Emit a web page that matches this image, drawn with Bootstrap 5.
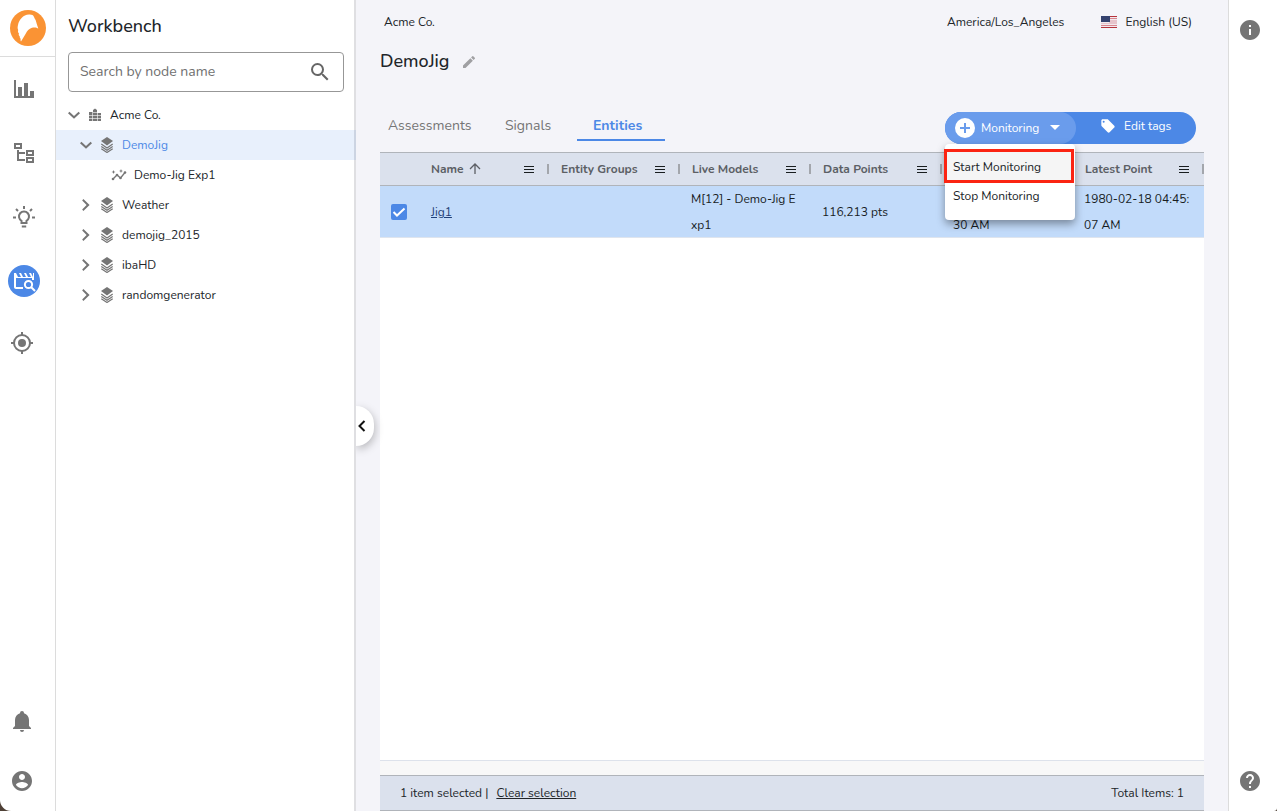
<!DOCTYPE html>
<html lang="en">
<head>
<meta charset="utf-8">
<meta name="viewport" content="width=device-width, initial-scale=1">
<title>Workbench</title>
<link href="https://cdn.jsdelivr.net/npm/bootstrap@5.3.0/dist/css/bootstrap.min.css" rel="stylesheet">
<style>
  :root { --blue: #4c88e6; --ink: #212529; --muted-ink: #757575; --head: #dbe1ed; --line: #b0b4ba; }
  body { font-family: Nunito, Lato, "Open Sans", sans-serif; font-size: 12px; line-height: 20px; color: var(--ink); background: #4e4036; }
  button { font: inherit; color: inherit; }
  svg { display: block; flex: none; fill: currentColor; }
  .outline-icon { fill: none; stroke: currentColor; stroke-width: 2; }
  .app { height: 100vh; background: #fff; border-radius: 0 0 3px 11px; }

  .rail { width: 56px; border-right: 1px solid #dcdcdc; color: var(--muted-ink); }
  .rail a { color: inherit; }
  .rail-logo { height: 57px; border-bottom: 1px solid #dcdcdc; }
  .rail-item { width: 48px; height: 64px; }
  .rail-item.compact { width: 44px; height: 60px; }
  .rail-active { width: 32px; height: 32px; border-radius: 50%; background: var(--blue); color: #fff; }

  .tree-panel { width: 300px; border-right: 2px solid #dfdfe2; }
  .tree-panel h1 { font-size: 18px; line-height: 52px; font-weight: 500; }
  .search-box { height: 40px; margin: 0 10px 8px 12px; padding: 0 11px; border: 1px solid #979797; border-radius: 4px; color: #666; }
  .search-box input { font-size: 14px; color: inherit; outline: 0; background: none; }
  .search-box input::placeholder { color: #707070; opacity: 1; }
  .tree-row { height: 30px; margin-right: -2px; color: var(--ink); text-decoration: none; }
  .tree-row svg { color: #757575; }
  .tree-row .kind { width: 22px; }
  .tree-row.selected { background: rgba(76, 136, 230, .13); color: var(--blue); }
  .level-1 { padding-left: 8px; }
  .level-2 { padding-left: 20px; }
  .level-3 { padding-left: 52px; }

  .main-area { background: #f4f4f9; padding: 0 24px; }
  .collapse-btn { left: 0; top: 50%; width: 18px; height: 40px; border-radius: 0 20px 20px 0; background: #fff; box-shadow: 1px 3px 8px rgba(0,0,0,.25); clip-path: inset(-20px -20px -20px 0); }
  .topline { height: 44px; }
  .flag { margin-left: 37px; }
  .title-line { height: 36px; margin-bottom: 32px; }
  .title-line h2 { font-size: 18px; font-weight: 500; }
  .toolbar { height: 40px; }
  .tab-link { min-width: 88px; height: 29px; padding-left: 16px; line-height: 28px; font-size: 14px; text-decoration: none; color: var(--muted-ink); }
  .tab-link.current { color: var(--blue); font-weight: 700; border-bottom: 2px solid var(--blue); }
  .tab-link.first { min-width: 109px; padding-left: 8px; }
  .pill-group { height: 32px; margin-right: 8px; border-radius: 16px; background: var(--blue); color: #fff; }
  .pill-btn { width: 120px; border-radius: 16px; color: #fff; }
  .pill-btn.open { width: 131px; background: #6a9cec; }
  .action-menu { top: 32px; left: 0; width: 130px; height: 76px; padding-top: 6px; background: #fff; border-radius: 4px; box-shadow: 0 4px 9px rgba(0,0,0,.38); z-index: 5; color: var(--ink); }
  .action-menu button { height: 30px; padding: 0 8px; width: 130px; text-align: left; white-space: nowrap; }
  .action-menu .marked { height: 34px; margin: -1px 0 -2px -1px; background: #f5f5f5; border: 3px solid #fb2412; padding: 2px 6px 0; }

  .grid-box { background: #fff; }
  .grid { table-layout: fixed; width: 100%; border-collapse: separate; border-spacing: 0; }
  .grid thead { background: var(--head); }
  .grid th { height: 34px; padding: 0 0 0 12px; font-weight: 700; color: #5c5f65; border-top: 1px solid var(--line); border-bottom: 1px solid var(--line); }
  .grid td { height: 52px; padding: 0 0 0 11px; line-height: 26px; background: #c2dbfa; box-shadow: inset 0 -1px #dfe5ee; color: #181d1f; white-space: nowrap; }
  .grid .pick { width: 38px; padding: 0 0 0 11px; }
  .grid .key { padding-left: 13px; }
  .head-menu { width: 10px; height: 7px; border: solid #181d1f; border-width: 1px 0; }
  .head-menu i { display: block; height: 1px; margin-top: 2px; background: #181d1f; }
  .sep { width: 2px; height: 10px; margin-left: 13px; background: #a3a6ac; }
  .pick-box { width: 16px; height: 16px; margin: 0; border: 0; display: block; }
  .pick-box.form-check-input:checked { background-color: var(--blue); background-image: none; border-radius: 2px; }
  .item-link { color: #1f3f77; }
  .grid-strip { height: 15px; background: #f8f8f8; border-top: 1px solid #dde2eb; }
  .grid-foot { height: 36px; padding: 0 20px; background: var(--head); border-top: 1px solid var(--line); border-bottom: 1px solid var(--line); }
  .side-rail { width: 49px; border-left: 1px solid #dcdcdc; color: #757575; padding: 18px 6px 18px 0; }
</style>
</head>
<body>
<svg width="0" height="0" class="position-absolute" aria-hidden="true">
  <symbol id="down" viewBox="0 0 24 24"><path d="M4 9.500 5.900 7.600 12 13.200 18.100 7.600 20 9.500 12 17z"/></symbol>
  <symbol id="right" viewBox="0 0 24 24"><path d="M8.500 4 6.900 5.900 12.800 12 6.900 18.100 8.500 20 16.800 12z"/></symbol>
  <symbol id="layers" viewBox="0 0 14 16"><path d="M7 0 13 4 7 8.500 1 4z"/><path d="M1.300 7 7 11 12.700 7M1.300 9.500 7 13.300 12.700 9.500M1.300 11.700 7 15.500 12.700 11.700" fill="none" stroke="currentColor" stroke-width="1.200"/></symbol>
</svg>
<div class="app d-flex overflow-hidden">
  <nav class="rail d-flex flex-column flex-shrink-0" aria-label="Sections">
    <a href="#" class="rail-logo d-flex align-items-center justify-content-center" aria-label="Home">
      <svg width="36" height="36" viewBox="0 0 36 36"><circle cx="18" cy="18" r="18" fill="#fa9334"/><path fill="#fff" d="M8 15C9 10 13 4.800 19 4.600c2.500-.2 4.300.6 5 2.400.3 1 1 1.800 1.600 3C26.500 12.500 27 15 28.300 18.600c-2-1.600-4.500-1.300-6.300-.8-3 .9-5 3-6.300 6L11 31.500c-.8-1-.2-2-.5-2.900-1-.6-.6-1.600-.9-2.500-1.200-.8-.8-1.900-.7-2.900-1.300-1-.9-2.200-.7-3.200-.9-1.500-.6-3.300-.2-5z"/></svg>
    </a>
    <a href="#" class="rail-item d-flex align-items-center justify-content-center" aria-label="Charts"><svg width="20" height="20" viewBox="0 0 20 20"><path d="M0 1h2v16h18v2H0zM4 8h4v9H4zM10 4h4v13h-4zM16 12h4v5h-4z"/></svg></a>
    <a href="#" class="rail-item d-flex align-items-center justify-content-center" aria-label="Hierarchy"><svg class="outline-icon" width="22" height="22" viewBox="0 0 22 22"><path d="M2 2h6v4H2zM5 8v10h7M5 11h7M14 9h6v4h-6zM14 16h6v4h-6z"/></svg></a>
    <a href="#" class="rail-item d-flex align-items-center justify-content-center" aria-label="Insights"><svg class="outline-icon" width="24" height="24" viewBox="0 0 24 24"><path d="M9.500 18v-2.200a5 5 0 1 1 5 0V18zM9.800 21.500h4.400M12 1v3M1 12.500h3M20 12.500h3M4 4l2 2M20 4l-2 2"/></svg></a>
    <a href="#" class="rail-item d-flex align-items-center justify-content-center" aria-label="Workbench" aria-current="page"><span class="rail-active d-flex align-items-center justify-content-center"><svg width="24" height="24" viewBox="0 0 24 24"><path d="M2 4h2l2 4h3L7 4h2l2 4h3l-2-4h2l2 4h3l-2-4h2l2 4V4h1v7h-2V9H4v9h7v2H4c-1.100 0-2-.9-2-2z"/><circle cx="16.500" cy="15.500" r="3.600" fill="none" stroke="#fff" stroke-width="2"/><path d="m19 18 4 4" stroke="#fff" stroke-width="2"/></svg></span></a>
    <a href="#" class="rail-item compact d-flex align-items-center justify-content-center" aria-label="Target"><svg width="24" height="24" viewBox="0 0 24 24"><circle cx="12" cy="12" r="4"/><circle cx="12" cy="12" r="8" fill="none" stroke="currentColor" stroke-width="2"/><path d="M11 1h2v3h-2zM11 20h2v3h-2zM1 11h3v2H1zM20 11h3v2h-3z"/></svg></a>
    <a href="#" class="rail-item compact mt-auto d-flex align-items-center justify-content-center" aria-label="Notifications"><svg width="24" height="24" viewBox="0 0 24 24"><path d="M21 19v1H3v-1l2-2v-6c0-3.100 2.030-5.830 5-6.710V4a2 2 0 0 1 4 0v.29c2.970.88 5 3.610 5 6.710v6l2 2m-7 2a2 2 0 0 1-4 0"/></svg></a>
    <a href="#" class="rail-item compact d-flex align-items-center justify-content-center" aria-label="Account"><svg width="24" height="24" viewBox="0 0 24 24"><path d="M12 2C6.480 2 2 6.480 2 12s4.480 10 10 10 10-4.480 10-10S17.520 2 12 2zm0 3c1.660 0 3 1.340 3 3s-1.340 3-3 3-3-1.340-3-3 1.340-3 3-3zm0 14.200c-2.500 0-4.710-1.280-6-3.220.03-1.990 4-3.080 6-3.080 1.990 0 5.970 1.090 6 3.080-1.290 1.940-3.500 3.220-6 3.220z"/></svg></a>
  </nav>

  <aside class="tree-panel flex-shrink-0">
    <h1 class="m-0 ps-2 ms-1">Workbench</h1>
    <div class="search-box d-flex align-items-center">
      <input type="text" class="border-0 flex-grow-1 p-0 w-100" placeholder="Search by node name" aria-label="Search by node name">
      <svg width="24" height="24" viewBox="0 0 24 24"><path d="M15.500 14h-.79l-.28-.27A6.471 6.471 0 0 0 16 9.500 6.500 6.500 0 1 0 9.500 16c1.610 0 3.090-.59 4.230-1.570l.27.28v.79l5 4.990L20.490 19l-4.990-5zm-6 0C7.010 14 5 11.990 5 9.500S7.010 5 9.500 5 14 7.010 14 9.500 11.990 14 9.500 14z"/></svg>
    </div>
    <a href="#" class="tree-row level-1 d-flex align-items-center"><svg width="20" height="18"><use href="#down"/></svg><svg class="kind" height="14" viewBox="0 0 22 14"><path d="M5 4h4V2l2-1.500L13 2v3h4v8H5z"/><path d="M5 7.500h12M5 10.500h12M8.500 4v9M13.500 5v8M9 4.500h4" stroke="#fff" stroke-width=".6"/></svg><span class="ms-1">Acme Co.</span></a>
    <a href="#" class="tree-row level-2 selected d-flex align-items-center"><svg width="20" height="18"><use href="#down"/></svg><svg class="kind" height="16"><use href="#layers"/></svg><span class="ms-1">DemoJig</span></a>
    <a href="#" class="tree-row level-3 d-flex align-items-center"><svg class="kind" height="14" viewBox="0 0 22 14"><path d="m5 11 4-4 3.500 3L17 4.500" fill="none" stroke="currentColor" stroke-width="1.300"/><circle cx="5" cy="11" r="1.300"/><circle cx="9" cy="7" r="1.300"/><circle cx="12.500" cy="10" r="1.300"/><circle cx="17" cy="4.500" r="1.300"/><path d="m5.500 2 .6 1.400 1.400.6-1.400.6L5.500 6l-.6-1.400L3.500 4l1.400-.6zM13 1l.6 1.400L15 3l-1.400.6L13 5l-.6-1.400L11 3l1.400-.6z"/></svg><span class="ms-1">Demo-Jig Exp1</span></a>
    <a href="#" class="tree-row level-2 d-flex align-items-center"><svg width="20" height="18"><use href="#right"/></svg><svg class="kind" height="16"><use href="#layers"/></svg><span class="ms-1">Weather</span></a>
    <a href="#" class="tree-row level-2 d-flex align-items-center"><svg width="20" height="18"><use href="#right"/></svg><svg class="kind" height="16"><use href="#layers"/></svg><span class="ms-1">demojig_2015</span></a>
    <a href="#" class="tree-row level-2 d-flex align-items-center"><svg width="20" height="18"><use href="#right"/></svg><svg class="kind" height="16"><use href="#layers"/></svg><span class="ms-1">ibaHD</span></a>
    <a href="#" class="tree-row level-2 d-flex align-items-center"><svg width="20" height="18"><use href="#right"/></svg><svg class="kind" height="16"><use href="#layers"/></svg><span class="ms-1">randomgenerator</span></a>
  </aside>

  <main class="main-area position-relative flex-grow-1 d-flex flex-column">
    <button type="button" class="collapse-btn position-absolute border-0 p-0" aria-label="Collapse panel"><svg width="12" height="14" viewBox="0 0 12 14"><path d="M8.500 2 3.500 7l5 5" fill="none" stroke="#111" stroke-width="2"/></svg></button>
    <header class="topline d-flex align-items-center">
      <span class="ps-1 me-auto">Acme Co.</span>
      <span>America/Los_Angeles</span>
      <svg class="flag me-2" width="16" height="12" viewBox="0 0 16 12"><path fill="#f2e9ee" d="M0 0h16v12H0z"/><path fill="#b5333c" d="M0 0h16v1H0zM0 11h16v1H0z"/><path fill="#d8848e" d="M8 2h8v1H8zM0 9h16v1H0z"/><path fill="#e6c3cb" d="M8 4h8v3H8zM0 7h16v1H0z"/><path fill="#35426f" d="M0 0h9v6H0z"/></svg>
      <span class="me-2 pe-1">English (US)</span>
    </header>
    <div class="title-line d-flex align-items-center">
      <h2 class="m-0">DemoJig</h2>
      <button type="button" class="border-0 bg-transparent p-0 ms-2 ps-1" aria-label="Edit name"><svg width="16" height="16" viewBox="0 0 24 24" color="#a0a0a3"><path d="M3 17.250V21h3.750L17.810 9.940l-3.750-3.750L3 17.250zM20.710 7.040a1 1 0 0 0 0-1.410l-2.340-2.340a1 1 0 0 0-1.410 0l-1.830 1.830 3.750 3.750 1.830-1.830z"/></svg></button>
    </div>
    <div class="toolbar d-flex">
      <a href="#" class="tab-link first">Assessments</a>
      <a href="#" class="tab-link">Signals</a>
      <a href="#" class="tab-link current">Entities</a>
      <div class="pill-group d-flex position-relative ms-auto">
        <button type="button" class="pill-btn open border-0 p-0 d-flex align-items-center" aria-expanded="true">
          <svg class="ms-2" width="24" height="24" viewBox="0 0 24 24"><circle cx="12" cy="12" r="10"/><path d="M7 12h10M12 7v10" stroke="#6a9cec" stroke-width="2"/></svg>
          <span class="ms-1">Monitoring</span>
          <svg class="ms-auto me-3" width="10" height="6" viewBox="0 0 10 6"><path d="M0 0h10L5 5z"/></svg>
        </button>
        <button type="button" class="pill-btn border-0 bg-transparent p-0 pb-1 d-flex align-items-center">
          <svg class="ms-4" width="16" height="16" viewBox="0 0 24 24"><path d="M5.500 7A1.500 1.500 0 1 1 5.500 4a1.500 1.500 0 0 1 0 3m15.910 4.580-9-9C12.050 2.220 11.550 2 11 2H4c-1.110 0-2 .89-2 2v7c0 .55.22 1.050.59 1.410l8.990 9c.37.360.87.590 1.420.590s1.050-.23 1.410-.590l7-7c.37-.36.590-.860.590-1.410s-.23-1.060-.590-1.420z"/></svg>
          <span class="ms-2">Edit tags</span>
        </button>
        <div class="action-menu position-absolute">
          <button type="button" class="marked d-block">Start Monitoring</button>
          <button type="button" class="border-0 bg-transparent d-block">Stop Monitoring</button>
        </div>
      </div>
    </div>
    <section class="grid-box flex-grow-1 d-flex flex-column">
      <table class="grid">
        <thead><tr>
          <th class="pick"></th>
          <th class="key"><div class="d-flex align-items-center"><span>Name</span><svg class="ms-1" width="14" height="14" viewBox="0 0 14 14"><path d="M7 12V2M2 7l5-5 5 5" fill="none" stroke="currentColor" stroke-width="1.300"/></svg><span class="head-menu ms-auto"><i></i></span><span class="sep"></span></div></th>
          <th><div class="d-flex align-items-center"><span>Entity Groups</span><span class="head-menu ms-auto"><i></i></span><span class="sep"></span></div></th>
          <th><div class="d-flex align-items-center"><span>Live Models</span><span class="head-menu ms-auto"><i></i></span><span class="sep"></span></div></th>
          <th><div class="d-flex align-items-center"><span>Data Points</span><span class="head-menu ms-auto"><i></i></span><span class="sep"></span></div></th>
          <th></th>
          <th><div class="d-flex align-items-center"><span>Latest Point</span><span class="head-menu ms-auto"><i></i></span><span class="sep"></span></div></th>
        </tr></thead>
        <tbody><tr>
          <td class="pick"><div class="position-relative"><input type="checkbox" class="form-check-input pick-box" checked aria-label="Select Jig1"><svg class="position-absolute top-0 start-0 pe-none" width="16" height="16" viewBox="0 0 16 16"><path d="m2.500 8 3.500 3.500 7.500-7" fill="none" stroke="#fff" stroke-width="2"/></svg></div></td>
          <td class="key"><a href="#" class="item-link">Jig1</a></td>
          <td></td>
          <td>M[12] - Demo-Jig E<br>xp1</td>
          <td>116,213 pts</td>
          <td><br>30 AM</td>
          <td>1980-02-18 04:45:<br>07 AM</td>
        </tr></tbody>
      </table>
      <div class="grid-strip mt-auto"></div>
      <footer class="grid-foot d-flex align-items-center">
        <span>1 item selected |</span>
        <a href="#" class="ms-2 me-auto text-reset">Clear selection</a>
        <span>Total Items: 1</span>
      </footer>
    </section>
  </main>

  <aside class="side-rail flex-shrink-0 d-flex flex-column align-items-center justify-content-between">
    <a href="#" class="text-reset" aria-label="Information"><svg width="24" height="24" viewBox="0 0 24 24"><path d="M12 2C6.480 2 2 6.480 2 12s4.480 10 10 10 10-4.480 10-10S17.520 2 12 2zm1 15h-2v-6h2v6zm0-8h-2V7h2v2z"/></svg></a>
    <a href="#" class="text-reset" aria-label="Help"><svg width="24" height="24" viewBox="0 0 24 24"><path d="M12 2C6.480 2 2 6.480 2 12s4.480 10 10 10 10-4.480 10-10S17.520 2 12 2zm1 17h-2v-2h2v2zm2.070-7.750-.9.920C13.450 12.900 13 13.500 13 15h-2v-.5c0-1.100.45-2.100 1.170-2.830l1.240-1.260c.37-.36.59-.86.59-1.410 0-1.100-.9-2-2-2s-2 .9-2 2H8c0-2.210 1.790-4 4-4s4 1.790 4 4c0 .88-.36 1.680-.93 2.250z"/></svg></a>
  </aside>
</div>
<script src="https://cdn.jsdelivr.net/npm/bootstrap@5.3.0/dist/js/bootstrap.bundle.min.js"></script>
</body>
</html>
